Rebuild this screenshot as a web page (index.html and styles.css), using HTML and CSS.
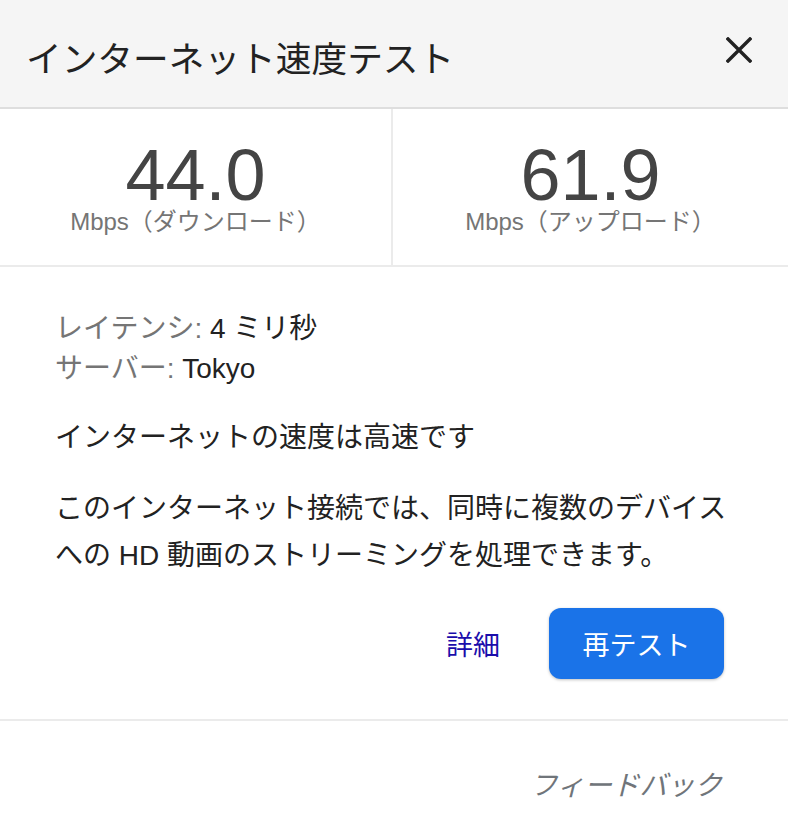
FILE: index.html
```html
<!DOCTYPE html>
<html lang="ja">
<head>
  <meta charset="UTF-8">
  <title>インターネット速度テスト</title>
  <meta name="viewport" content="width=device-width, initial-scale=1.0">
  <link rel="stylesheet" href="styles.css">
</head>
<body>
  <div class="speed-card">
    <div class="card-header">
      <span class="card-title">インターネット速度テスト</span>
      <button class="close-btn" aria-label="閉じる">
        <svg viewBox="0 0 26 26" width="26" height="26">
          <path d="M2 2 L24 24 M24 2 L2 24" stroke="#222" stroke-width="3.4" stroke-linecap="square" fill="none"/>
        </svg>
      </button>
    </div>

    <!-- Download / upload results -->
    <div class="stat-row">
      <div class="stat-cell">
        <div class="stat-value">44.0</div>
        <div class="stat-label">Mbps（ダウンロード）</div>
      </div>
      <div class="stat-cell">
        <div class="stat-value">61.9</div>
        <div class="stat-label">Mbps（アップロード）</div>
      </div>
    </div>

    <div class="card-body">
      <div class="meta-list">
        <div><span class="meta-key">レイテンシ:</span> 4 ミリ秒</div>
        <div><span class="meta-key">サーバー:</span> Tokyo</div>
      </div>
      <p class="verdict">インターネットの速度は高速です</p>
      <p class="desc">このインターネット接続では、同時に複数のデバイスへの HD 動画のストリーミングを処理できます。</p>
      <div class="actions">
        <a class="details-link" href="#">詳細</a>
        <button class="retest-btn">再テスト</button>
      </div>
    </div>

    <div class="card-footer">
      <a class="feedback-link" href="#">フィードバック</a>
    </div>
  </div>
</body>
</html>
```

FILE: styles.css
```css
html, body {
  margin: 0;
  background: #fff;
}
body {
  font-family: "Liberation Sans", "Noto Sans CJK JP", sans-serif;
  color: #222;
}
.speed-card {
  width: 788px;
}
.card-header {
  height: 109px;
  background: #f5f5f5;
  border-bottom: 2px solid #dedede;
  display: flex;
  align-items: flex-start;
  justify-content: space-between;
  padding: 38px 36px 0 26px;
  box-sizing: border-box;
}
.card-title {
  font-size: 35.7px;
  line-height: 44px;
  color: #222;
}
.close-btn {
  background: transparent;
  border: none;
  padding: 0;
  margin-top: -1px;
  width: 26px;
  height: 26px;
  cursor: pointer;
  display: flex;
}
/* Results */
.stat-row {
  display: grid;
  grid-template-columns: 393px 1fr;
  height: 158px;
  border-bottom: 2px solid #ebebeb;
  box-sizing: border-box;
}
.stat-cell {
  display: flex;
  flex-direction: column;
  align-items: center;
  padding-top: 36px;
}
.stat-cell:first-child {
  border-right: 2px solid #ebebeb;
}
.stat-value {
  font-size: 72px;
  line-height: 60px;
  color: #444;
}
.stat-label {
  font-size: 24px;
  line-height: 28px;
  color: #757575;
  margin-top: 3px;
}
/* Details */
.card-body {
  padding: 42px 64px 40px 55px;
  border-bottom: 2px solid #ebebeb;
}
.meta-list {
  font-size: 28px;
  line-height: 40px;
  color: #222;
}
.meta-key {
  color: #757575;
}
.verdict {
  margin: 28px 0 0;
  font-size: 28px;
  line-height: 41px;
}
.desc {
  margin: 27px -8px 0 0;
  font-size: 28px;
  line-height: 47px;
}
.actions {
  display: flex;
  justify-content: flex-end;
  align-items: center;
  gap: 49px;
  margin-top: 29px;
}
.details-link {
  font-size: 27px;
  color: #1a0dab;
  text-decoration: none;
}
.retest-btn {
  width: 175px;
  height: 71px;
  border: none;
  border-radius: 12px;
  background: #1a73e8;
  color: #fff;
  font-family: inherit;
  font-size: 27px;
  box-shadow: 0 1px 3px rgba(0, 0, 0, 0.25);
  cursor: pointer;
}
.card-footer {
  display: flex;
  justify-content: flex-end;
  padding: 42px 66px 0 0;
}
.feedback-link {
  font-size: 27.5px;
  font-style: italic;
  color: #70757a;
  text-decoration: none;
}
```
